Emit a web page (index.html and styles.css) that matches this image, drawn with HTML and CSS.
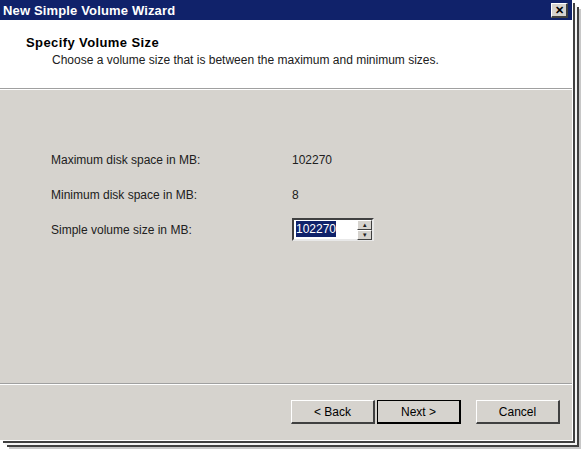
FILE: index.html
```html
<html>

<head>
    <meta charset="utf-8">
    <title>New Simple Volume Wizard</title>
    <link rel="stylesheet" href="styles.css">
</head>

<body>
    <div class="window">
        <!-- title bar -->
        <div class="titleBar">
            <span class="title">New Simple Volume Wizard</span>
            <span class="closeButton">&#x2715;</span>
        </div>

        <!-- page header -->
        <div class="header">
            <div class="heading">Specify Volume Size</div>
            <div class="subheading">Choose a volume size that is between the maximum and minimum sizes.</div>
        </div>

        <!-- size fields -->
        <div class="content">
            <div class="fieldRow">
                <span class="label">Maximum disk space in MB:</span>
                <span class="value">102270</span>
            </div>
            <div class="fieldRow">
                <span class="label">Minimum disk space in MB:</span>
                <span class="value">8</span>
            </div>
            <div class="fieldRow">
                <span class="label">Simple volume size in MB:</span>
                <div class="spinBox">
                    <div class="spinText"><span class="selected">102270</span></div>
                    <div class="spinArrows">
                        <div class="arrow">&#x25B4;</div>
                        <div class="arrow">&#x25BE;</div>
                    </div>
                </div>
            </div>
        </div>

        <!-- wizard buttons -->
        <div class="footer">
            <div class="buttonPair">
                <div class="button">&lt; Back</div>
                <div class="button default">Next &gt;</div>
            </div>
            <div class="button">Cancel</div>
        </div>
    </div>
</body>

</html>
```

FILE: styles.css
```css
body {
    margin: 0;
    background: #ffffff;
    font-family: "Liberation Sans", Arial, sans-serif;
    font-size: 12px;
    color: #202020;
    overflow: hidden;
}

.window {
    width: 572px;
    height: 440px;
    display: flex;
    flex-direction: column;
    background: #d6d3ce;
    box-shadow: 1px 1px 0 0 #ffffff, 3px 3px 0 0 #404040, 5px 5px 0 0 #f4f4f4,
        7px 7px 0 0 #404040, 9px 9px 0 0 #c8c8c8, 10px 10px 0 0 #ffffff;
}

.titleBar {
    height: 20px;
    background: #10226a;
    display: flex;
    align-items: center;
    justify-content: space-between;
    padding: 0 4px 0 3px;
}

.title {
    color: #ffffff;
    font-weight: bold;
    font-size: 13px;
    letter-spacing: 0.15px;
}

.closeButton {
    width: 14px;
    height: 12px;
    background: #d6d3ce;
    border: 1px solid #ffffff;
    border-right: 2px solid #404040;
    border-bottom: 2px solid #404040;
    color: #000000;
    font-size: 11px;
    font-weight: bold;
    line-height: 12px;
    text-align: center;
}

.header {
    height: 69px;
    background: #ffffff;
    border-bottom: 1px solid #a0a0a0;
    box-shadow: 0 1px 0 #ffffff;
    padding: 15px 0 0 26px;
    box-sizing: border-box;
}

.heading {
    font-weight: bold;
    font-size: 13px;
    color: #000000;
    letter-spacing: 0.4px;
}

.subheading {
    margin: 3px 0 0 26px;
}

.content {
    flex: 1;
    padding: 59px 0 0 51px;
    border-bottom: 1px solid #a0a0a0;
    box-shadow: 0 1px 0 #ffffff;
}

.fieldRow {
    display: flex;
    align-items: center;
    height: 23px;
    margin-bottom: 12px;
}

.label {
    width: 241px;
}

.spinBox {
    width: 82px;
    height: 23px;
    display: flex;
    box-sizing: border-box;
    background: #ffffff;
    border: 2px solid #404040;
    border-right-color: #e8e8e8;
    border-bottom-color: #e8e8e8;
}

.spinText {
    flex: 1;
    padding: 2px 0 0 2px;
}

.selected {
    background: #10226a;
    color: #ffffff;
    padding: 1px 0;
}

.spinArrows {
    width: 15px;
    display: flex;
    flex-direction: column;
}

.arrow {
    flex: 1;
    background: #d6d3ce;
    border: 1px solid #ffffff;
    border-right-color: #404040;
    border-bottom-color: #404040;
    font-size: 7px;
    line-height: 8px;
    text-align: center;
}

.footer {
    height: 56px;
    display: flex;
    align-items: flex-start;
    justify-content: flex-end;
    gap: 15px;
    padding: 16px 12px 0 0;
    box-sizing: border-box;
}

.buttonPair {
    display: flex;
    gap: 2px;
}

.button {
    width: 84px;
    height: 24px;
    box-sizing: border-box;
    display: flex;
    align-items: center;
    justify-content: center;
    border: 1px solid #ffffff;
    border-right: 2px solid #404040;
    border-bottom: 2px solid #404040;
    color: #000000;
}

.default {
    outline: 1px solid #000000;
    outline-offset: -1px;
    border-color: #000000;
}
```
